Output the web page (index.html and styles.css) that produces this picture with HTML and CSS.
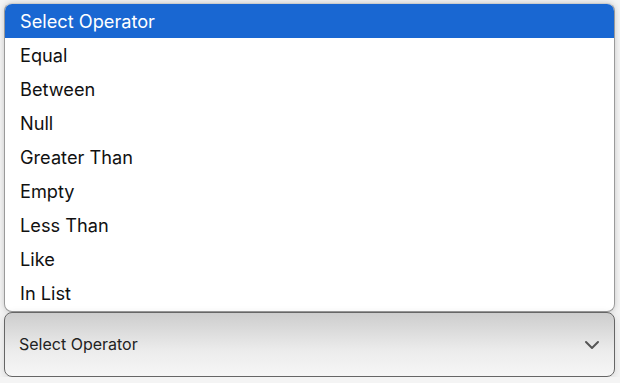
FILE: index.html
```html
<!DOCTYPE html>
<html lang="en">
<head>
  <meta charset="UTF-8">
  <title>Select Operator</title>
  <link rel="stylesheet" href="styles.css">
</head>
<body>
  <div class="wrap">
    <ul class="menu">
      <li class="opt active">Select Operator</li>
      <li class="opt">Equal</li>
      <li class="opt">Between</li>
      <li class="opt">Null</li>
      <li class="opt">Greater Than</li>
      <li class="opt">Empty</li>
      <li class="opt">Less Than</li>
      <li class="opt">Like</li>
      <li class="opt">In List</li>
    </ul>
    <div class="select">
      <span>Select Operator</span>
      <svg class="chev" width="16" height="10" viewBox="0 0 16 10"><path d="M2 2l6 6 6-6" fill="none" stroke="#555" stroke-width="2" stroke-linecap="round" stroke-linejoin="round"/></svg>
    </div>
  </div>
</body>
</html>
```

FILE: styles.css
```css
body { margin:0; background:#f4f4f4; font-family:Inter, 'Liberation Sans', sans-serif; }
.wrap { padding:3px 5px 0 4px; }
.menu { list-style:none; margin:0; padding:0; background:#fff; border:1px solid #9a9a9a; border-top-color:#ccc; border-radius:8px; overflow:hidden; box-shadow:0 0 6px rgba(0,0,0,0.18); height:307px; }
.opt { height:34px; line-height:35px; padding-left:15px; font-size:18.2px; color:#111; }
.opt.active { background:#1967d2; color:#fff; height:34px; line-height:34px; }
.select { box-sizing:border-box; height:65px; border:1px solid #666; border-radius:8px; display:flex; align-items:center; justify-content:space-between; padding:0 14px 2px 14px; background:linear-gradient(#cdcdcd, #ececec 60%, #f6f6f6); box-shadow:0 2px 8px rgba(0,0,0,0.12); font-size:16px; color:#222; }
.chev { margin-top:2px; }
```
